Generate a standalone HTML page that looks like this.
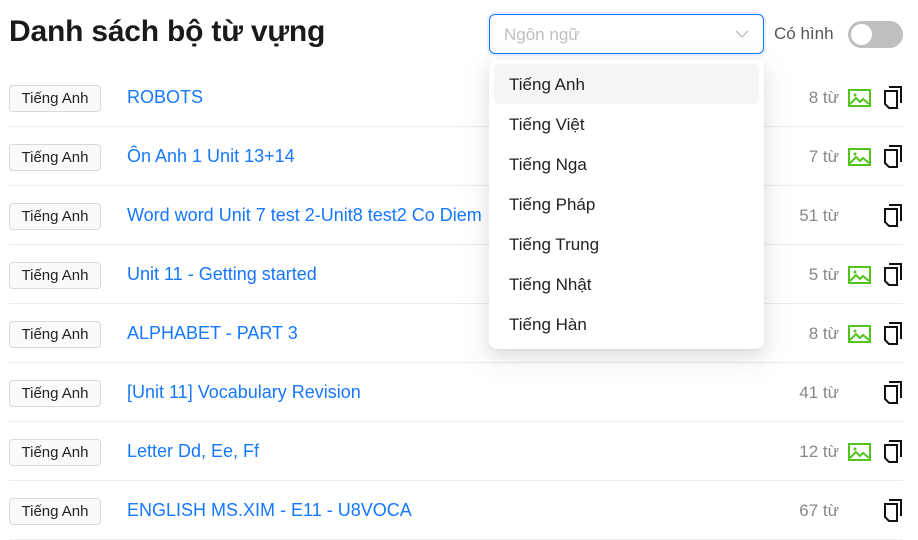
<!DOCTYPE html>
<html><head><meta charset="utf-8"><style>
*{box-sizing:border-box;margin:0;padding:0}
body{width:918px;height:524px;overflow:hidden;background:#fff;font-family:"Liberation Sans","DejaVu Sans",sans-serif;position:relative;color:#1f1f1f}
h1{position:absolute;left:9px;top:15px;font-size:30px;font-weight:bold;color:#1a1a1a;letter-spacing:-0.2px}
.sel{position:absolute;left:489px;top:14px;width:275px;height:40px;border:1px solid #1677ff;border-radius:6px;box-shadow:0 0 0 2px rgba(22,119,255,.1)}
.sel span{position:absolute;left:14px;top:10px;font-size:17px;color:#bfbfbf}
.sel svg{position:absolute;right:14px;top:14px}
.lbl{position:absolute;left:774px;top:24px;font-size:17px;color:#555}
.tog{position:absolute;left:848px;top:21px;width:55px;height:27px;border-radius:14px;background:#bfbfbf}
.tog i{position:absolute;left:3px;top:3px;width:21px;height:21px;border-radius:50%;background:#fff}
.row{position:absolute;left:9px;width:894px;height:59px;border-bottom:1px solid #ececec}
.tag{position:absolute;left:0;top:17px;width:92px;height:27px;border:1px solid #d9d9d9;border-radius:4px;background:#fafafa;font-size:15px;line-height:25px;text-align:center;color:#222}
.t{position:absolute;left:118px;top:19px;font-size:18px;color:#1677ff;white-space:nowrap}
.c{position:absolute;right:64px;top:20px;font-size:17px;color:#888}
.img{position:absolute;left:839px;top:20px}
.cp{position:absolute;left:874px;top:18px}
.dd{position:absolute;left:489px;top:60px;width:275px;height:289px;background:#fff;border-radius:8px;box-shadow:0 6px 16px rgba(0,0,0,.08),0 3px 6px -4px rgba(0,0,0,.12),0 9px 28px 8px rgba(0,0,0,.05);padding:4px 5px}
.dd div{height:40px;line-height:42px;padding-left:15px;font-size:17px;color:#222;border-radius:5px}
.dd div.a{background:#f5f5f5}
</style></head><body>
<h1>Danh sách bộ từ vựng</h1>
<div class="sel"><span>Ngôn ngữ</span><svg width="14" height="10" viewBox="0 0 14 10"><path d="M1 2l6 6 6-6" fill="none" stroke="#bbb" stroke-width="1.3"/></svg></div>
<div class="lbl">Có hình</div>
<div class="tog"><i></i></div>

<div class="row" style="top:68px"><div class="tag">Tiếng Anh</div><div class="t">ROBOTS</div><div class="c">8 từ</div><svg class="img" width="23" height="20"><rect x="1" y="2" width="21" height="16" fill="none" stroke="#52c41a" stroke-width="2"/><path d="M2 16l6-6 4 4 3-3 6 5" fill="none" stroke="#52c41a" stroke-width="2"/><circle cx="7" cy="7" r="1.5" fill="#52c41a"/></svg><svg class="cp" width="20" height="23"><path d="M6 1h12v16" fill="none" stroke="#111" stroke-width="2"/><path d="M2 5h12v17H6l-4-4z" fill="none" stroke="#111" stroke-width="2"/></svg></div>
<div class="row" style="top:127px"><div class="tag">Tiếng Anh</div><div class="t">Ôn Anh 1 Unit 13+14</div><div class="c">7 từ</div><svg class="img" width="23" height="20"><rect x="1" y="2" width="21" height="16" fill="none" stroke="#52c41a" stroke-width="2"/><path d="M2 16l6-6 4 4 3-3 6 5" fill="none" stroke="#52c41a" stroke-width="2"/><circle cx="7" cy="7" r="1.5" fill="#52c41a"/></svg><svg class="cp" width="20" height="23"><path d="M6 1h12v16" fill="none" stroke="#111" stroke-width="2"/><path d="M2 5h12v17H6l-4-4z" fill="none" stroke="#111" stroke-width="2"/></svg></div>
<div class="row" style="top:186px"><div class="tag">Tiếng Anh</div><div class="t">Word word Unit 7 test 2-Unit8 test2 Co Diem</div><div class="c">51 từ</div><svg class="cp" width="20" height="23"><path d="M6 1h12v16" fill="none" stroke="#111" stroke-width="2"/><path d="M2 5h12v17H6l-4-4z" fill="none" stroke="#111" stroke-width="2"/></svg></div>
<div class="row" style="top:245px"><div class="tag">Tiếng Anh</div><div class="t">Unit 11 - Getting started</div><div class="c">5 từ</div><svg class="img" width="23" height="20"><rect x="1" y="2" width="21" height="16" fill="none" stroke="#52c41a" stroke-width="2"/><path d="M2 16l6-6 4 4 3-3 6 5" fill="none" stroke="#52c41a" stroke-width="2"/><circle cx="7" cy="7" r="1.5" fill="#52c41a"/></svg><svg class="cp" width="20" height="23"><path d="M6 1h12v16" fill="none" stroke="#111" stroke-width="2"/><path d="M2 5h12v17H6l-4-4z" fill="none" stroke="#111" stroke-width="2"/></svg></div>
<div class="row" style="top:304px"><div class="tag">Tiếng Anh</div><div class="t">ALPHABET - PART 3</div><div class="c">8 từ</div><svg class="img" width="23" height="20"><rect x="1" y="2" width="21" height="16" fill="none" stroke="#52c41a" stroke-width="2"/><path d="M2 16l6-6 4 4 3-3 6 5" fill="none" stroke="#52c41a" stroke-width="2"/><circle cx="7" cy="7" r="1.5" fill="#52c41a"/></svg><svg class="cp" width="20" height="23"><path d="M6 1h12v16" fill="none" stroke="#111" stroke-width="2"/><path d="M2 5h12v17H6l-4-4z" fill="none" stroke="#111" stroke-width="2"/></svg></div>
<div class="row" style="top:363px"><div class="tag">Tiếng Anh</div><div class="t">[Unit 11] Vocabulary Revision</div><div class="c">41 từ</div><svg class="cp" width="20" height="23"><path d="M6 1h12v16" fill="none" stroke="#111" stroke-width="2"/><path d="M2 5h12v17H6l-4-4z" fill="none" stroke="#111" stroke-width="2"/></svg></div>
<div class="row" style="top:422px"><div class="tag">Tiếng Anh</div><div class="t">Letter Dd, Ee, Ff</div><div class="c">12 từ</div><svg class="img" width="23" height="20"><rect x="1" y="2" width="21" height="16" fill="none" stroke="#52c41a" stroke-width="2"/><path d="M2 16l6-6 4 4 3-3 6 5" fill="none" stroke="#52c41a" stroke-width="2"/><circle cx="7" cy="7" r="1.5" fill="#52c41a"/></svg><svg class="cp" width="20" height="23"><path d="M6 1h12v16" fill="none" stroke="#111" stroke-width="2"/><path d="M2 5h12v17H6l-4-4z" fill="none" stroke="#111" stroke-width="2"/></svg></div>
<div class="row" style="top:481px"><div class="tag">Tiếng Anh</div><div class="t">ENGLISH MS.XIM - E11 - U8VOCA</div><div class="c">67 từ</div><svg class="cp" width="20" height="23"><path d="M6 1h12v16" fill="none" stroke="#111" stroke-width="2"/><path d="M2 5h12v17H6l-4-4z" fill="none" stroke="#111" stroke-width="2"/></svg></div>

<div class="dd">
<div class="a">Tiếng Anh</div><div>Tiếng Việt</div><div>Tiếng Nga</div><div>Tiếng Pháp</div><div>Tiếng Trung</div><div>Tiếng Nhật</div><div>Tiếng Hàn</div>
</div>
</body></html>
